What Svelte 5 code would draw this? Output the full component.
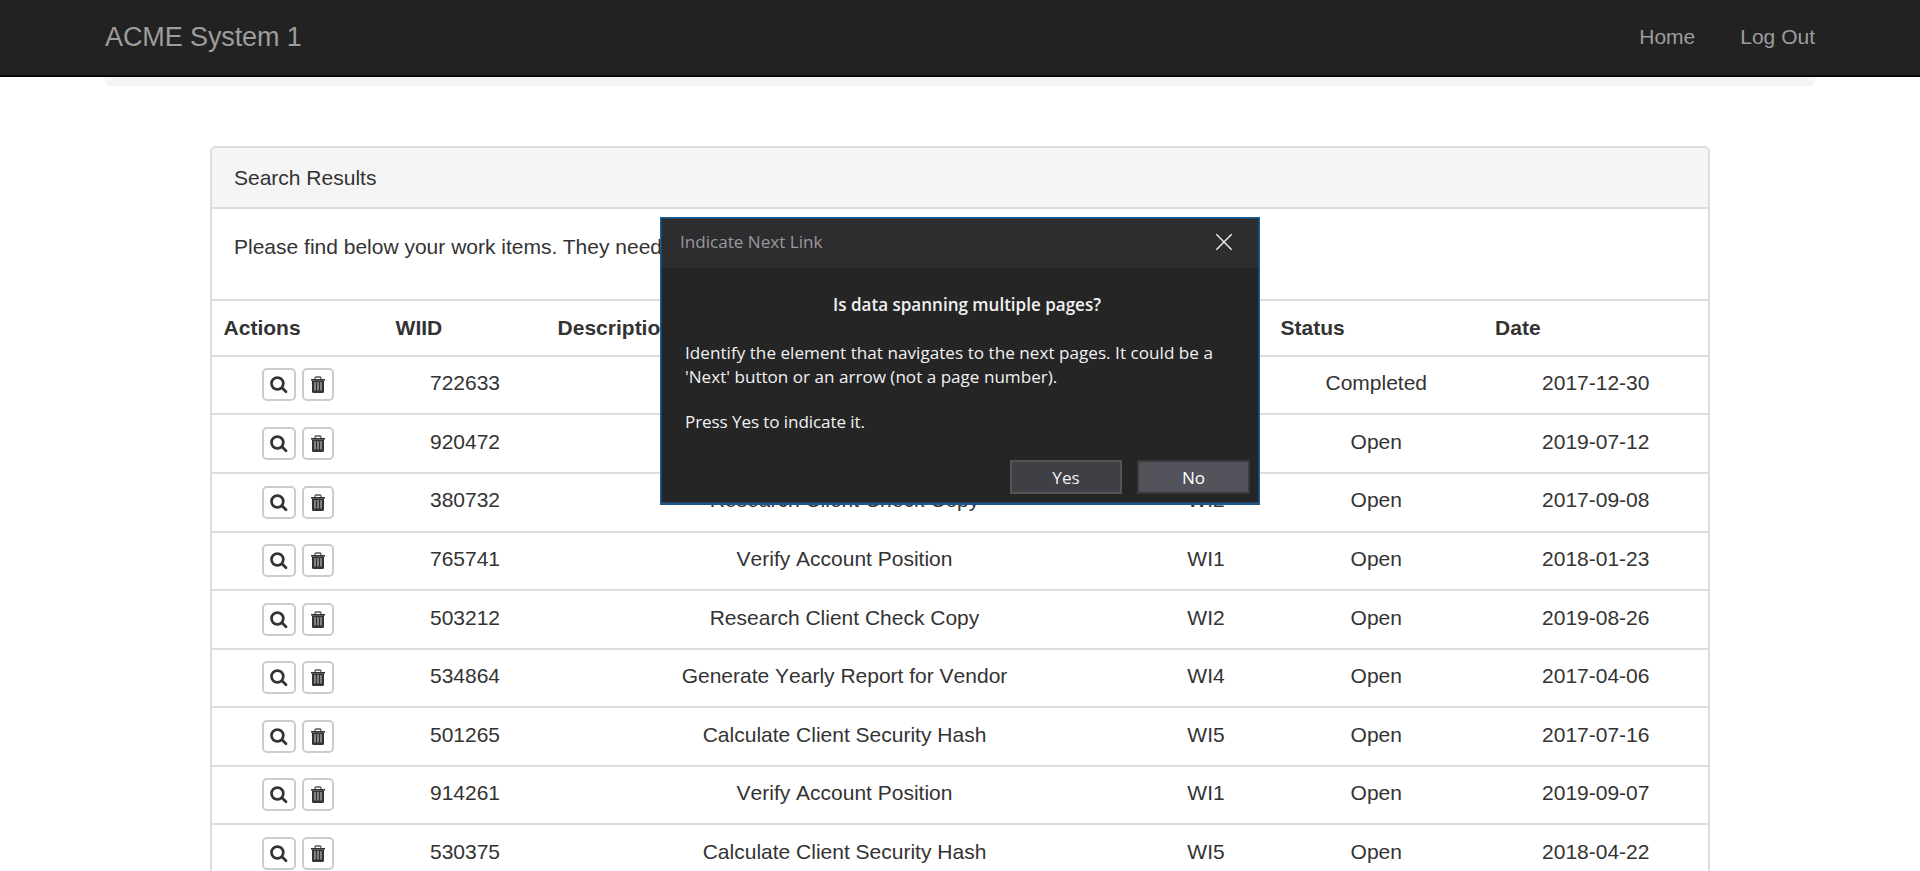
<script>
  const rows = [
    { id: '722633', desc: 'Calculate Client Security Hash', type: 'WI5', status: 'Completed', date: '2017-12-30', h: 58, pad: 11 },
    { id: '920472', desc: 'Verify Account Position', type: 'WI1', status: 'Open', date: '2019-07-12', h: 59, pad: 12 },
    { id: '380732', desc: 'Research Client Check Copy', type: 'WI2', status: 'Open', date: '2017-09-08', h: 59, pad: 11, shift: 1 },
    { id: '765741', desc: 'Verify Account Position', type: 'WI1', status: 'Open', date: '2018-01-23', h: 58, pad: 11 },
    { id: '503212', desc: 'Research Client Check Copy', type: 'WI2', status: 'Open', date: '2019-08-26', h: 59, pad: 12 },
    { id: '534864', desc: 'Generate Yearly Report for Vendor', type: 'WI4', status: 'Open', date: '2017-04-06', h: 58, pad: 11 },
    { id: '501265', desc: 'Calculate Client Security Hash', type: 'WI5', status: 'Open', date: '2017-07-16', h: 59, pad: 12 },
    { id: '914261', desc: 'Verify Account Position', type: 'WI1', status: 'Open', date: '2019-09-07', h: 58, pad: 11 },
    { id: '530375', desc: 'Calculate Client Security Hash', type: 'WI5', status: 'Open', date: '2018-04-22', h: 59, pad: 12 }
  ];
</script>

<div class="page">
  <nav>
    <span class="brand">ACME System 1</span>
    <span class="links"><span>Home</span><span>Log Out</span></span>
  </nav>
  <div class="well"></div>
  <section class="panel">
    <header>Search Results</header>
    <p class="intro">Please find below your work items. They need</p>
    <div class="row head">
      <span>Actions</span><span>WIID</span><span>Description</span><span>Type</span><span>Status</span><span>Date</span>
    </div>
    {#each rows as r}
      <div class="row" style:height="{r.h}px" style:padding-top="{r.pad}px">
        <span class="actions" style:padding-top="{r.shift ?? 0}px">
          <span class="btn view">
            <svg width="18" height="18" viewBox="0 0 18 18"><circle cx="7.4" cy="7.5" r="5.9" fill="none" stroke="#333" stroke-width="2.7" /><path d="M12 11.8 L16 15.8" stroke="#333" stroke-width="2.8" stroke-linecap="round" /></svg>
          </span>
          <span class="btn del">
            <svg width="16" height="18" viewBox="0 0 16 18"><path d="M5 3.2V2.2Q5 1 6.2 1H9.8Q11 1 11 2.2V3.2" fill="none" stroke="#555" stroke-width="1.3" /><path d="M1 3H15V4.6H1Z" fill="#333" /><path d="M2 4.5H14V15.5Q14 17 12.5 17H3.5Q2 17 2 15.5Z" fill="#333" /><path d="M5 6V14.6M8 6V14.6M11 6V14.6" stroke="#b4b4b4" stroke-width="1.2" /></svg>
          </span>
        </span>
        <span>{r.id}</span><span>{r.desc}</span><span>{r.type}</span><span>{r.status}</span><span>{r.date}</span>
      </div>
    {/each}
  </section>

  <div class="dialog">
    <div class="titlebar">
      <span>Indicate Next Link</span>
      <svg width="18" height="18" viewBox="0 0 18 18"><path d="M1.3 1.3 16.7 16.7M16.7 1.3 1.3 16.7" stroke="#f1f1f1" stroke-width="1.4" fill="none" /></svg>
    </div>
    <h2>Is data spanning multiple pages?</h2>
    <p class="lead">Identify the element that navigates to the next pages. It could be a</p>
    <p>'Next' button or an arrow (not a page number).</p>
    <p class="prompt">Press Yes to indicate it.</p>
    <div class="buttons"><button>Yes</button><button class="no">No</button></div>
  </div>
</div>

<style>
  :global(body) { margin: 0; background: #fff; }
  .page { position: relative; height: 871px; overflow: hidden; font: 21px/30px "Liberation Sans", Arial, sans-serif; color: #333; }
  nav { box-sizing: border-box; height: 77px; padding: 0 105px 2px; display: flex; justify-content: space-between; align-items: center; background: #222; border-bottom: 2px solid #080808; color: #9d9d9d; }
  .brand { font-size: 27px; letter-spacing: -0.1px; }
  .links { display: flex; gap: 45px; }
  .well { margin: 0 105px; height: 9px; background: #f5f5f5; border-radius: 0 0 6px 6px; }
  .panel { box-sizing: border-box; width: 1500px; height: 760px; margin: 60px auto 0; border: 2px solid #ddd; border-radius: 6px 6px 0 0; }
  header { box-sizing: border-box; height: 61px; padding: 15px 22px; background: #f5f5f5; border-bottom: 2px solid #ddd; border-radius: 4px 4px 0 0; }
  .intro { margin: 0; height: 67px; padding: 23px 22px 0; }
  .row { box-sizing: border-box; display: grid; grid-template-columns: 172px 162px 597px 126px 214.5px 224.5px; border-top: 2px solid #ddd; text-align: center; font-kerning: none; }
  .head { height: 56px; text-align: left; font-weight: bold; padding-top: 12px; }
  .head span { padding-left: 11.6px; }
  .actions { display: flex; justify-content: center; gap: 6px; }
  .btn { box-sizing: border-box; height: 33px; border: 2px solid #ccc; border-radius: 5px; display: flex; align-items: center; justify-content: center; background: #fff; }
  .view { width: 34px; }
  .del { width: 32px; }
  .dialog { position: absolute; left: 660px; top: 217px; width: 600px; height: 288px; box-sizing: border-box; border: 1px solid #1264a8; border-bottom: 2px solid #1b568a; box-shadow: inset 0 0 0 1px #24435f; background: #252526; color: #f1f1f1; font: 17.1px/24px "Open Sans", "Noto Sans", sans-serif; }
  .titlebar { height: 49px; margin: 1px 1px 0; box-sizing: border-box; padding: 0 25px 4px 18px; display: flex; align-items: center; justify-content: space-between; background: #2d2d30; color: #999; }
  .dialog p, h2 { margin: 0; white-space: nowrap; }
  .dialog p { padding-left: 24px; }
  h2 { padding: 25px 0 24px 14px; text-align: center; font-size: 17.05px; font-weight: 600; line-height: 24px; }
  .lead { letter-spacing: 0.03px; }
  .dialog .prompt { margin-top: 21px; letter-spacing: -0.1px; }
  .buttons { display: flex; justify-content: flex-end; gap: 15px; padding: 26px 9px 0 0; }
  button { box-sizing: border-box; width: 112px; height: 34px; padding: 1px 0 0; border: 2px solid #555; background: #3f3f46; color: #f1f1f1; font: inherit; }
  .no { width: 113px; background: #53535c; border-color: #3a3a3d; color: #fff; }
</style>
